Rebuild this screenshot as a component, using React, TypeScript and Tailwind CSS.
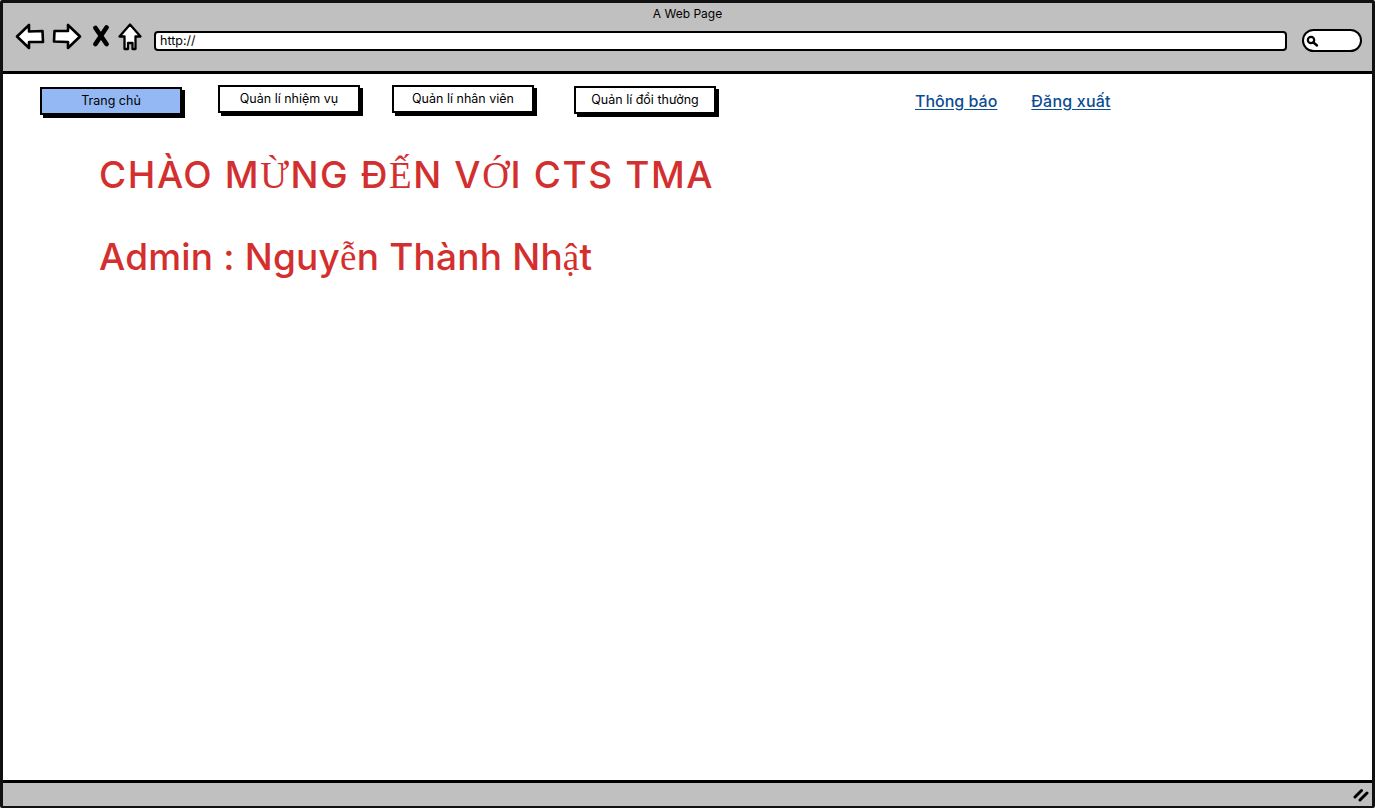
import React from "react";

const SERIF = "font-['Liberation_Serif',serif] font-normal";

function NavButton({ label, fill, className }: { label: React.ReactNode; fill?: boolean; className: string }) {
  return (
    <div
      className={`flex h-[28px] w-[142px] shrink-0 items-center justify-center border-2 border-black text-[12.5px] leading-none text-black shadow-[3px_3px_0_#000] ${
        fill ? "bg-[#94b8f3]" : "bg-white"
      } ${className}`}
    >
      {label}
    </div>
  );
}

function Back() {
  return (
    <svg width="30" height="27" viewBox="0 0 30 27" className="shrink-0">
      <path d="M2 13.500 14 2v6.500l13.500-.5.500 11H14v6z" fill="#fff" stroke="#000" strokeWidth="2.600" strokeLinejoin="round" />
    </svg>
  );
}
function Forward() {
  return (
    <svg width="30" height="27" viewBox="0 0 30 27" className="shrink-0">
      <path d="M28 13.500 16 2v6H2.500L2 18.500l14 .5v6z" fill="#fff" stroke="#000" strokeWidth="2.600" strokeLinejoin="round" />
    </svg>
  );
}
function Close() {
  return (
    <svg width="18" height="22" viewBox="0 0 18 22" className="shrink-0">
      <path d="M3.500 3 14.500 19M14.500 2.500 3.500 19" stroke="#000" strokeWidth="4.600" strokeLinecap="round" fill="none" />
    </svg>
  );
}
function Home() {
  return (
    <svg width="24" height="28" viewBox="0 0 24 28" className="shrink-0">
      <path
        d="M12 1.500 1.500 13.500H6.500V26H10v-6h4.500v6h3V13.500h5z"
        fill="#fff"
        stroke="#000"
        strokeWidth="2.300"
        strokeLinejoin="round"
      />
    </svg>
  );
}
function Glass() {
  return (
    <svg width="14" height="14" viewBox="0 0 14 14" className="shrink-0">
      <circle cx="6" cy="6" r="3.200" fill="none" stroke="#000" strokeWidth="2.200" />
      <path d="M8.500 8.500 12 11.500" stroke="#000" strokeWidth="2.400" strokeLinecap="round" />
    </svg>
  );
}
function Grip() {
  return (
    <svg width="16" height="14" viewBox="0 0 16 14" className="shrink-0">
      <path d="M2 9 8.500 2.500M7 12 14 5" stroke="#000" strokeWidth="3" strokeLinecap="round" fill="none" />
    </svg>
  );
}

export default function App() {
  return (
    <div className="flex h-[808px] w-[1375px] flex-col overflow-hidden bg-white font-['Inter','Noto_Sans',sans-serif]">
      <div className="flex min-h-0 flex-1 flex-col rounded-[2px] border-[3px] border-b-2 border-[#111]">
        <header className="flex h-[71px] shrink-0 flex-col border-b-[3px] border-black bg-[#c0c0c0]">
          <div className="h-[19px] pt-[2px] text-center text-[12px] leading-[17px] text-black">A Web Page</div>
          <div className="flex items-start pl-[12px] pr-[10px] pt-[1px]">
            <Back />
            <div className="ml-[7px]">
              <Forward />
            </div>
            <div className="ml-[10px] mt-[2px]">
              <Close />
            </div>
            <div className="ml-[8px]">
              <Home />
            </div>
            <div className="ml-[12px] mt-[8px] flex h-[20px] flex-1 items-center rounded-[4px] border-[2.500px] border-black bg-white pl-[4px] text-[12.500px] text-black">
              http://
            </div>
            <div className="ml-[15px] mt-[6px] flex h-[23px] w-[60px] items-center rounded-[12px] border-[2.500px] border-black bg-white pl-[1px]">
              <Glass />
            </div>
          </div>
        </header>

        <main className="min-h-0 flex-1 bg-white">
          <nav className="flex h-[70px] items-start pl-[37px]">
            <NavButton fill label="Trang chủ" className="mt-[13px]" />
            <NavButton label="Quản lí nhiệm vụ" className="ml-[36px] mt-[11px]" />
            <NavButton label="Quản lí nhân viên" className="ml-[32px] mt-[11px]" />
            <NavButton label="Quản lí đổi thưởng" className="ml-[40px] mt-[12px]" />
            <a className="ml-[199px] mt-[17px] text-[16px] font-medium leading-[20px] text-[#0b4c95] underline underline-offset-2">
              Thông báo
            </a>
            <a className="ml-[34px] mt-[17px] text-[16px] font-medium leading-[20px] tracking-[0.200px] text-[#0b4c95] underline underline-offset-2">
              Đăng xuất
            </a>
          </nav>
          <section className="pl-[96px] text-[#d32f2f]">
            <h1 className="h-[90px] pt-[8px] text-[37px] font-medium leading-[46px] tracking-[1.600px]">
              CHÀO M<span className={SERIF}>Ừ</span>NG Đ<span className={SERIF}>Ế</span>N V<span className={SERIF}>Ớ</span>I CTS TMA
            </h1>
            <h2 className="text-[37px] font-medium leading-[46px] tracking-[0.200px]">
              Admin : Nguy<span className={SERIF}>ễ</span>n Thành Nh<span className={SERIF}>ậ</span>t
            </h2>
          </section>
        </main>

        <footer className="flex h-[26px] shrink-0 items-center justify-end border-t-[3px] border-black bg-[#c0c0c0] pr-[3px]">
          <Grip />
        </footer>
      </div>
    </div>
  );
}
